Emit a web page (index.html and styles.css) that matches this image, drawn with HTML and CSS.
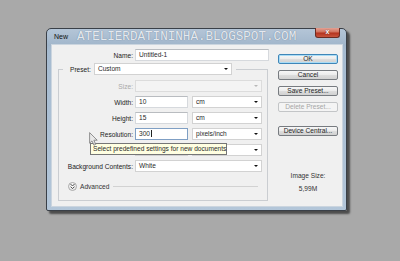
FILE: index.html
```html
<!DOCTYPE html>
<html>
<head>
<meta charset="utf-8">
<link rel="stylesheet" href="styles.css">
</head>
<body>
<div class="window">
  <div class="titlebar">
    <span class="title">New</span>
    <span class="watermark">ATELIERDATININHA.BLOGSPOT.COM</span>
    <span class="close">x</span>
  </div>
  <div class="client">
    <div class="form">
      <div class="name-row">
        <span class="label">Name:</span>
        <span class="field text">Untitled-1</span>
      </div>
      <fieldset class="group">
        <legend class="legend"><span class="legend-inner"><span class="label">Preset:</span><span class="field select preset">Custom</span></span></legend>
        <div class="fields">
          <span class="label off">Size:</span><span class="field select disabled"></span>
          <span class="label">Width:</span><span class="pair"><span class="field text short">10</span><span class="field select unit">cm</span></span>
          <span class="label">Height:</span><span class="pair"><span class="field text short">15</span><span class="field select unit">cm</span></span>
          <span class="label">Resolution:</span><span class="pair"><span class="field text short focus">300<span class="caret"></span></span><span class="field select unit">pixels/inch</span></span>
          <span class="label"></span><span class="pair"><span class="field select short"></span><span class="field select unit"></span></span>
          <span class="label">Background Contents:</span><span class="field select">White</span>
        </div>
        <div class="advanced">
          <span class="adv-btn"><svg width="7" height="7" viewBox="0 0 7 7"><path d="M1.5 1 L3.5 3 L5.5 1 M1.5 3.6 L3.5 5.6 L5.5 3.6" fill="none" stroke="#333" stroke-width="0.9"/></svg></span>
          <span class="adv-label">Advanced</span>
          <span class="adv-line"></span>
        </div>
      </fieldset>
    </div>
    <div class="side">
      <span class="btn default">OK</span>
      <span class="btn">Cancel</span>
      <span class="btn">Save Preset...</span>
      <span class="btn disabled">Delete Preset...</span>
      <span class="btn central">Device Central...</span>
      <span class="size-label">Image Size:</span>
      <span class="size-value">5,99M</span>
    </div>
  </div>
</div>
<div class="tooltip">Select predefined settings for new documents</div>
<svg class="cursor" width="10" height="15" viewBox="0 0 10 15"><path d="M0.6 0.6 L0.6 11.2 L3 8.9 L4.9 13.2 L6.7 12.4 L4.9 8.2 L8.2 8.2 Z" fill="#e6e6e6" fill-opacity="0.85" stroke="#7a7a7a" stroke-width="0.8"/></svg>
</body>
</html>
```

FILE: styles.css
```css
* { box-sizing: border-box; }

html, body {
  margin: 0;
  padding: 0;
}

body {
  width: 400px;
  height: 261px;
  overflow: hidden;
  background: #a9a9a9;
  font-family: "Liberation Sans", Arial, sans-serif;
  font-size: 6.6px;
  color: #262626;
}

.window {
  margin: 28px 0 0 46px;
  width: 301px;
  height: 183px;
  border: 1px solid #3a4048;
  border-radius: 5px 5px 2px 2px;
  background: linear-gradient(#b4c5d7, #a1b6cb 9%, #a6bbd0 12%, #b3c6d9);
  box-shadow: 3px 3px 2px rgba(0, 0, 0, 0.55);
  padding: 0 3px 3px 4px;
  display: flex;
  flex-direction: column;
}

.titlebar {
  height: 15px;
  display: flex;
  align-items: center;
  flex: none;
}

.title {
  font-size: 7px;
  color: #101010;
  padding-left: 3px;
}

.watermark {
  font-family: "Liberation Mono", "Courier New", monospace;
  font-size: 12.6px;
  color: rgba(250, 252, 255, 0.85);
  text-shadow: 0 0 1px rgba(70, 90, 115, 0.7);
  margin-left: 9px;
  padding-top: 2px;
  line-height: 13px;
}

.close {
  margin-left: auto;
  margin-right: 3px;
  align-self: flex-start;
  margin-top: -1px;
  width: 25px;
  height: 10px;
  border: 1px solid #6a2b22;
  border-top: none;
  border-radius: 0 0 3px 3px;
  background: linear-gradient(#e3a193, #d0705c 45%, #b4331f 55%, #c7553e);
  color: #fff;
  font-size: 7px;
  font-weight: bold;
  line-height: 8px;
  text-align: center;
  text-shadow: 0 0 1px #5a1a10;
}

.client {
  height: 163px;
  background: #f0f0f0;
  border: 1px solid #cbd5df;
  display: flex;
  padding-top: 4px;
}

.form {
  width: 226px;
  flex: none;
}

.name-row {
  display: grid;
  grid-template-columns: 81px 134px;
  column-gap: 2px;
  height: 12px;
  align-items: center;
}

.label {
  text-align: right;
  white-space: nowrap;
  color: #222;
}

.label.off { color: #a8a8a8; }

.field {
  height: 12px;
  background: #fff;
  border: 1px solid #d6d9dd;
  border-top-color: #b9bcc0;
  line-height: 10px;
  padding-left: 3px;
  color: #2a2a2a;
  white-space: nowrap;
  overflow: hidden;
}

.select {
  display: flex;
  align-items: center;
  border-color: #d2d2d2;
  padding-right: 3px;
}

.select::after {
  content: "";
  margin-left: auto;
  border-left: 2px solid transparent;
  border-right: 2px solid transparent;
  border-top: 2.5px solid #111;
  flex: none;
}

.select.disabled {
  background: #f4f4f4;
  border-color: #dcdcdc;
}

.select.disabled::after { border-top-color: #b8b8b8; }

.group {
  margin: 2px 0 0 6px;
  padding: 0 0 9px 0;
  width: 210px;
  border: 1px solid #cacdd1;
  min-inline-size: 0;
}

.legend {
  margin-left: 4px;
  padding: 0 4px 0 7px;
  height: 12px;
}

.legend-inner {
  display: flex;
  align-items: center;
  gap: 3px;
  height: 12px;
}

.preset { width: 138px; }

.fields {
  display: grid;
  grid-template-columns: 74px 127px;
  grid-auto-rows: 12px;
  column-gap: 2px;
  row-gap: 4px;
  align-items: center;
  padding-top: 5px;
}

.pair {
  display: flex;
  gap: 4px;
}

.short { width: 53px; }
.unit { width: 70px; }

.focus {
  border-color: #7f9fc4;
}

.caret {
  display: inline-block;
  width: 1px;
  height: 7px;
  background: #222;
  vertical-align: -1px;
  margin-left: 0.5px;
}

.advanced {
  display: flex;
  align-items: center;
  margin: 10px 9px 0 9px;
  height: 9px;
}

.adv-btn {
  width: 9px;
  height: 9px;
  border-radius: 50%;
  border: 1px solid #a9a9a9;
  background: radial-gradient(circle at 40% 35%, #ffffff, #e2e2e2);
  display: flex;
  align-items: center;
  justify-content: center;
  flex: none;
}

.adv-label {
  margin-left: 3px;
  color: #333;
}

.adv-line {
  flex: 1;
  height: 1px;
  background: #d2d2d2;
  margin-left: 4px;
}

.side {
  width: 60px;
  display: flex;
  flex-direction: column;
  gap: 6px;
  padding-top: 5px;
}

.btn {
  height: 10px;
  border: 1px solid #777b80;
  border-radius: 2px;
  background: linear-gradient(#f7f7f7, #ececec 45%, #dddddd 52%, #d1d1d1);
  text-align: center;
  line-height: 8px;
  color: #1e1e1e;
  white-space: nowrap;
}

.btn.default {
  border-color: #3f86b8;
  box-shadow: inset 0 0 0 1px #a9dcf6;
}

.btn.disabled {
  border-color: #c3c5c7;
  background: #f4f4f4;
  color: #a6a6a6;
}

.btn.central { margin-top: 8px; }

.size-label {
  margin-top: 30px;
  text-align: center;
  line-height: 8px;
  color: #333;
}

.size-value {
  margin-top: -1px;
  text-align: center;
  line-height: 8px;
  color: #333;
}

.tooltip {
  position: absolute;
  left: 90px;
  top: 143px;
  width: 137px;
  height: 12px;
  border: 1px solid #767676;
  background: #ffffe1;
  color: #2c2c2c;
  line-height: 10px;
  padding-left: 2px;
  white-space: nowrap;
}

.cursor {
  position: absolute;
  left: 89px;
  top: 132px;
}
```
